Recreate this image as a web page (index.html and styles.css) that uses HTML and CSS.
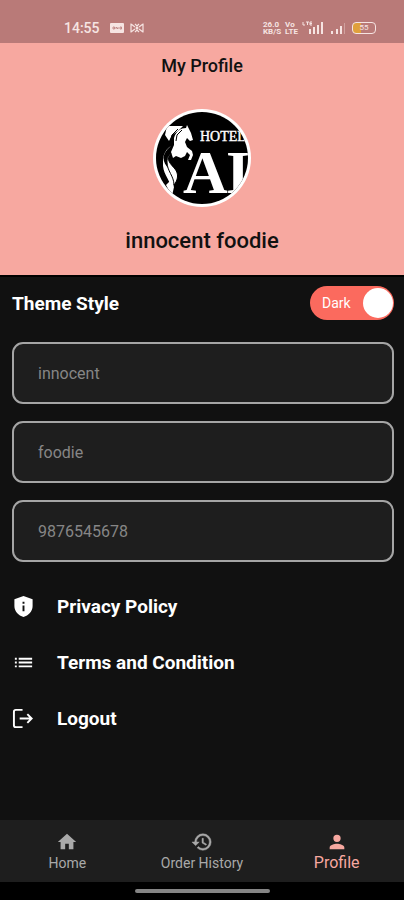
FILE: index.html
```html
<!DOCTYPE html>
<html lang="en">
<head>
    <meta charset="UTF-8">
    <meta name="viewport" content="width=device-width, initial-scale=1.0">
    <title>My Profile</title>
    <link rel="stylesheet" href="styles.css">
</head>
<body>

<!-- Phone status bar -->
<div class="status-bar">
    <div class="status-left">
        <span class="clock">14:55</span>
        <svg width="14" height="12" viewBox="0 0 14 12" aria-hidden="true">
            <rect x="0" y="1" width="14" height="10" rx="1" fill="#f6e4e2"/>
            <path d="M3 5v2h1.500V5zM6 7V5l2 2V5M10 5v2h1.500V5z" fill="none" stroke="#b97a78" stroke-width=".8"/>
        </svg>
        <svg width="14" height="12" viewBox="0 0 14 12" aria-hidden="true">
            <path d="M1 1.500v9M13 1.500v9M1 2l4 3M1 10l4-3M13 2L9 5M13 10L9 7M5 2l2 2 2-2M5 10l2-2 2 2" fill="none" stroke="#f6e4e2" stroke-width="1.200"/>
            <circle cx="7" cy="6" r="1.500" fill="#f6e4e2"/>
        </svg>
    </div>
    <div class="status-right">
        <span class="stacked">26.0<br>KB/S</span>
        <span class="stacked">Vo<br>LTE</span>
        <svg width="24" height="14" viewBox="0 0 24 14" aria-hidden="true">
            <path d="M1 1v3h2M4 1h3M5.500 1v3M10 1H8v3h2M8 2.500h2" fill="none" stroke="#f6e4e2"/>
            <path d="M7 8h2v5H7zM11 6h2v7h-2zM15 4h2v9h-2zM19 1h2v12h-2z" fill="#f6e4e2"/>
        </svg>
        <svg width="18" height="14" viewBox="0 0 18 14" aria-hidden="true">
            <path d="M1 10h2v3H1zM6 8h2v5H6zM10 5h2v8h-2z" fill="#f6e4e2"/>
            <path d="M14 2h1v11h-1z" fill="#d0a19e"/>
        </svg>
        <span class="battery">55</span>
    </div>
</div>

<!-- Profile header -->
<header class="profile-header">
    <h1>My Profile</h1>
    <svg class="avatar" viewBox="0 0 98 98" role="img" aria-label="Hotel logo">
        <defs>
            <clipPath id="avatar-clip"><circle cx="49" cy="49" r="46"/></clipPath>
        </defs>
        <circle cx="49" cy="49" r="49" fill="#fff"/>
        <circle cx="49" cy="49" r="46" fill="#000"/>
        <g clip-path="url(#avatar-clip)">
            <!-- horse -->
            <path d="M14 17H30L25 22 19 26 16 32 12 26z" fill="#fff"/>
            <path d="M21 29C23 22 28 19 33 19L34 16 36 20 38 24 40 31 37 32 34 29 32 33 34 38 39 42 40 46 38 51 35 51 37 46 34 43 32 47 28 49 23 47 20 49 18 43 21 36z" fill="#fff"/>
            <path d="M29 21l-5 5-1 6M25 20l-6 6-2 8" fill="none" stroke="#000" stroke-width="1"/>
            <!-- ribbons -->
            <path d="M18 37C8 45 9 53 16 60 23 66 23 72 19 80 16 69 9 64 10 53 10 45 13 40 18 37z" fill="#fff"/>
            <path d="M18 44C12 51 18 55 22 60 26 65 25 71 21 76 21 67 14 62 14 53 14 48 16 45 18 44z" fill="#fff" stroke="#000" stroke-width="1"/>
            <path d="M13 76l5-5 3 7-2 9z" fill="#fff"/>
            <text class="logo-small" x="47" y="32">HOTEL</text>
            <text class="logo-large" x="30" y="84">A</text>
            <text class="logo-large" x="73" y="84">I</text>
        </g>
    </svg>
    <p class="profile-name">innocent foodie</p>
</header>

<main class="content">
    <div class="theme-row">
        <label class="theme-title" for="theme">Theme Style</label>
        <div class="toggle">
            <input type="checkbox" role="switch" id="theme" checked>
            <label class="toggle-label" for="theme">Dark</label>
        </div>
    </div>

    <form class="fields">
        <input class="field" type="text" aria-label="First name" value="innocent">
        <input class="field" type="text" aria-label="Last name" value="foodie">
        <input class="field" type="tel" aria-label="Phone number" value="9876545678">
    </form>

    <ul class="menu">
        <li>
            <a href="#privacy">
                <svg viewBox="0 0 24 24" aria-hidden="true"><path fill="currentColor" fill-rule="evenodd" d="M12 1 2.500 4.500v7c0 5.550 4.300 10 9.500 11.500 5.200-1.500 9.500-5.950 9.500-11.500v-7zM11 7h2v2h-2zM11 11h2v6h-2z"/></svg>
                Privacy Policy
            </a>
        </li>
        <li>
            <a href="#terms">
                <svg viewBox="0 0 24 24" aria-hidden="true"><path fill="currentColor" d="M3 13h2v-2H3zM3 17h2v-2H3zM3 9h2V7H3zM7 13h14v-2H7zM7 17h14v-2H7zM7 7v2h14V7z"/></svg>
                Terms and Condition
            </a>
        </li>
        <li>
            <a href="#logout">
                <svg viewBox="0 0 24 24" aria-hidden="true"><path fill="none" stroke="currentColor" stroke-width="2" d="M11 3H4Q2 3 2 5V19Q2 21 4 21H11M8 12H20M16 7.500 20.500 12 16 16.500"/></svg>
                Logout
            </a>
        </li>
    </ul>
</main>

<!-- Bottom tabs -->
<nav class="tab-bar">
    <a class="tab" href="#home">
        <svg viewBox="0 0 24 24" aria-hidden="true"><path fill="currentColor" d="M10 20v-6h4v6h5v-8h3L12 3 2 12h3v8z"/></svg>
        Home
    </a>
    <a class="tab" href="#orders">
        <svg viewBox="0 0 24 24" aria-hidden="true"><path fill="currentColor" stroke="currentColor" stroke-width=".5" d="M13 3a9 9 0 0 0-9 9H1l3.890 3.890.070.140L9 12H6a7 7 0 1 1 7 7c-1.930 0-3.680-.790-4.940-2.060l-1.420 1.420A8.950 8.950 0 0 0 13 21a9 9 0 0 0 0-18zM12 8v5l4.280 2.540.720-1.210-3.500-2.080V8z"/></svg>
        Order History
    </a>
    <a class="tab active" href="#profile">
        <svg viewBox="0 0 24 24" aria-hidden="true"><path fill="currentColor" d="M12 12a4 4 0 1 0 0-8 4 4 0 0 0 0 8zM12 14c-2.670 0-8 1.340-8 4v2h16v-2c0-2.660-5.330-4-8-4z"/></svg>
        Profile
    </a>
</nav>

<div class="gesture-bar"></div>

</body>
</html>
```

FILE: styles.css
```css
/* General styling for body */
* {
    box-sizing: border-box;
}

body {
    font-family: Roboto, "Noto Sans", sans-serif;
    background-color: #111;
    color: #fff;
    margin: 0;
    min-height: 100vh;
    display: flex;
    flex-direction: column;
}

a {
    color: inherit;
    text-decoration: none;
}

/* Status bar */
.status-bar {
    height: 43px;
    padding: 12px 28px 0 64px;
    display: flex;
    justify-content: space-between;
    align-items: center;
    background-color: #b97a78;
    color: #f6e4e2;
}

.status-left {
    display: flex;
    align-items: center;
    gap: 6px;
}

.clock {
    font-size: 14px;
    font-weight: 500;
    margin-right: 4px;
}

.status-right {
    display: flex;
    align-items: center;
    gap: 4px;
}

.stacked {
    font-size: 8px;
    line-height: 7px;
    font-weight: 700;
}

.battery {
    width: 24px;
    height: 12px;
    border: 1px solid #f6e4e2;
    border-radius: 4px;
    background: linear-gradient(to right, #e0a03c 8px, transparent 8px);
    font-size: 8px;
    line-height: 10px;
    text-align: center;
}

/* Profile header */
.profile-header {
    height: 234px;
    padding-top: 11px;
    display: flex;
    flex-direction: column;
    align-items: center;
    background-color: #f7a8a0;
    border-bottom: 2px solid #000;
    color: #111;
}

h1 {
    font-size: 18px;
    line-height: 24px;
    font-weight: 500;
    margin: 0;
}

.avatar {
    width: 98px;
    height: 98px;
    margin-top: 31px;
}

.logo-small,
.logo-large {
    font-family: "Liberation Serif", serif;
    fill: #fff;
}

.logo-small {
    font-size: 14px;
    stroke: #fff;
    stroke-width: 0.4;
}

.logo-large {
    font-size: 62px;
    font-weight: 700;
}

.profile-name {
    font-size: 22px;
    line-height: 24px;
    font-weight: 500;
    margin: 22px 0 0;
}

/* Main content */
.content {
    flex: 1;
    padding: 9px 10px 24px 12px;
}

.theme-row {
    display: flex;
    justify-content: space-between;
    align-items: center;
}

.theme-title {
    font-size: 19px;
    font-weight: 700;
}

/* Theme switch */
.toggle {
    display: grid;
    align-items: center;
}

.toggle input,
.toggle-label {
    grid-area: 1 / 1;
}

.toggle input {
    appearance: none;
    width: 84px;
    height: 34px;
    margin: 0;
    padding: 2px 1px;
    display: flex;
    border-radius: 17px;
    background-color: #555;
    cursor: pointer;
}

.toggle input::before {
    content: "";
    width: 30px;
    height: 30px;
    border-radius: 50%;
    background-color: #fff;
}

.toggle input:checked {
    justify-content: flex-end;
    background-color: #fb6a5e;
}

.toggle-label {
    padding-left: 12px;
    font-size: 14px;
    pointer-events: none;
}

/* Text fields */
.fields {
    display: flex;
    flex-direction: column;
    gap: 17px;
    margin-top: 22px;
}

.field {
    width: 100%;
    height: 62px;
    padding: 0 24px;
    border: 2px solid #a5a5a5;
    border-radius: 11px;
    background-color: #1e1e1e;
    color: #868686;
    font-family: inherit;
    font-size: 16px;
}

/* Menu links */
.menu {
    list-style: none;
    margin: 16px 0 0;
    padding: 0;
}

.menu a {
    height: 56px;
    display: flex;
    align-items: center;
    gap: 22px;
    font-size: 19px;
    font-weight: 700;
}

.menu svg {
    width: 23px;
    height: 23px;
}

/* Bottom tabs */
.tab-bar {
    height: 62px;
    display: grid;
    grid-template-columns: repeat(3, 1fr);
    background-color: #1e1e1e;
    color: #a9a9a9;
}

.tab {
    display: flex;
    flex-direction: column;
    align-items: center;
    padding-top: 11px;
    font-size: 14px;
    line-height: 20px;
}

.tab svg {
    width: 22px;
    height: 22px;
}

.tab.active {
    color: #f7a8a0;
    font-size: 16px;
}

/* Gesture bar */
.gesture-bar {
    height: 18px;
    display: flex;
    justify-content: center;
    align-items: center;
    background-color: #000;
}

.gesture-bar::before {
    content: "";
    width: 135px;
    height: 4px;
    border-radius: 2px;
    background-color: #858585;
}
```
